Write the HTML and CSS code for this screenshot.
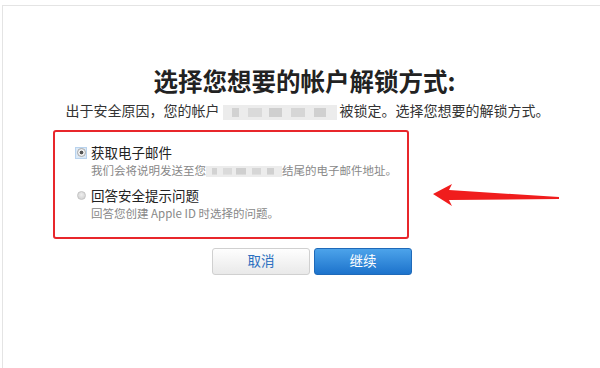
FILE: index.html
```html
<!DOCTYPE html>
<html lang="zh-CN">
<head>
<meta charset="utf-8">
<title>选择解锁方式</title>
<link rel="stylesheet" href="styles.css">
</head>
<body>
<div class="window">
  <div class="page">
    <h1 class="title">选择您想要的帐户解锁方式:</h1>
    <p class="intro">出于安全原因，您的帐户<span class="blur blur-intro"></span>被锁定。选择您想要的解锁方式。</p>
    <div class="choice-area">
      <div class="options">
        <div class="option">
          <span class="radio-wrap focused"><span class="radio checked"></span></span>
          <div class="option-text">
            <div class="option-title">获取电子邮件</div>
            <div class="option-desc">我们会将说明发送至您<span class="blur blur-desc"></span>结尾的电子邮件地址。</div>
          </div>
        </div>
        <div class="option">
          <span class="radio-wrap"><span class="radio"></span></span>
          <div class="option-text">
            <div class="option-title">回答安全提示问题</div>
            <div class="option-desc">回答您创建 Apple ID 时选择的问题。</div>
          </div>
        </div>
      </div>
      <svg class="arrow" width="130" height="26" viewBox="0 0 130 26" aria-hidden="true">
        <polygon points="1,12 20,2 17,8 127,15 127,17 17,18 20,24" fill="#f01d1d"/>
      </svg>
    </div>
    <div class="actions">
      <button class="btn btn-cancel" type="button">取消</button>
      <button class="btn btn-continue" type="button">继续</button>
    </div>
  </div>
</div>
</body>
</html>
```

FILE: styles.css
```css
html, body {
  margin: 0;
  padding: 0;
  background: #ffffff;
}

body {
  width: 600px;
  height: 368px;
  overflow: hidden;
  font-family: "Noto Sans CJK SC", "Liberation Sans", sans-serif;
  color: #333333;
}

.window {
  margin: 5px 0 0 2px;
  height: 363px;
  border-top: 1px solid #e4e4e4;
  border-left: 1px solid #e4e4e4;
  box-sizing: border-box;
}

.page {
  display: flex;
  flex-direction: column;
  padding-top: 60px;
}

.title {
  margin: 0;
  font-size: 24.5px;
  line-height: 30px;
  font-weight: 700;
  color: #222222;
  text-align: center;
  padding-left: 6px;
}

.intro {
  margin: 5px 0 0 0;
  font-size: 14px;
  line-height: 18px;
  color: #333333;
  text-align: center;
  padding-left: 12px;
  white-space: nowrap;
}

.blur {
  display: inline-block;
  vertical-align: middle;
  background-color: #ececec;
  background-image:
    linear-gradient(90deg, transparent 0 8%, #d2d2d2 8% 14%, transparent 14% 22%, #dadada 22% 34%, transparent 34% 40%, #cfcfcf 40% 52%, transparent 52% 60%, #d6d6d6 60% 72%, transparent 72% 80%, #d0d0d0 80% 90%, transparent 90%);
  background-size: 100% 60%;
  background-position: 0 50%;
  background-repeat: no-repeat;
}

.blur-intro {
  width: 114px;
  height: 15px;
  margin: 0 3px;
}

.blur-desc {
  width: 76px;
  height: 11px;
}

.choice-area {
  position: relative;
  margin: 10px 0 0 50px;
  width: 356px;
}

.options {
  box-sizing: border-box;
  width: 356px;
  height: 109px;
  border: 2px solid #e8262b;
  border-radius: 3px;
  padding: 11px 0 0 20px;
  display: flex;
  flex-direction: column;
  gap: 8px;
}

.option {
  display: flex;
  align-items: flex-start;
  gap: 4px;
}

.radio-wrap {
  flex: none;
  width: 12px;
  height: 12px;
  margin-top: 4px;
  display: flex;
  align-items: center;
  justify-content: center;
  box-sizing: border-box;
}

.radio-wrap.focused {
  background: #dbe9f7;
  border: 1px solid #b9d3ee;
}

.radio {
  display: block;
  width: 9px;
  height: 9px;
  border-radius: 50%;
  box-sizing: border-box;
  background: radial-gradient(circle at 50% 40%, #eeeeee, #cccccc);
  border: 1px solid #c4c4c4;
}

.radio.checked {
  background: radial-gradient(circle, #555555 0 1.6px, #f0f0f0 2.2px);
  border-color: #a9a9a9;
}

.option-text {
  display: flex;
  flex-direction: column;
}

.option-title {
  font-size: 13.5px;
  line-height: 19px;
  color: #222222;
}

.option-desc {
  font-size: 11.5px;
  line-height: 16px;
  color: #888888;
  white-space: nowrap;
}

.arrow {
  position: absolute;
  left: 379px;
  top: 52px;
}

.actions {
  margin: 9px 0 0 209px;
  display: flex;
  gap: 4px;
}

.btn {
  width: 98px;
  height: 27px;
  border-radius: 3px;
  font-family: "Noto Sans CJK SC", "Liberation Sans", sans-serif;
  font-size: 13.5px;
  line-height: 1;
  padding: 0;
  cursor: pointer;
}

.btn-cancel {
  background: linear-gradient(#fefefe, #e9e9e9);
  border: 1px solid #d0d0d0;
  color: #2a6fc0;
}

.btn-continue {
  background: linear-gradient(#4ca3ea, #1d73cc);
  border: 1px solid #1f6ab9;
  color: #ffffff;
}
```
